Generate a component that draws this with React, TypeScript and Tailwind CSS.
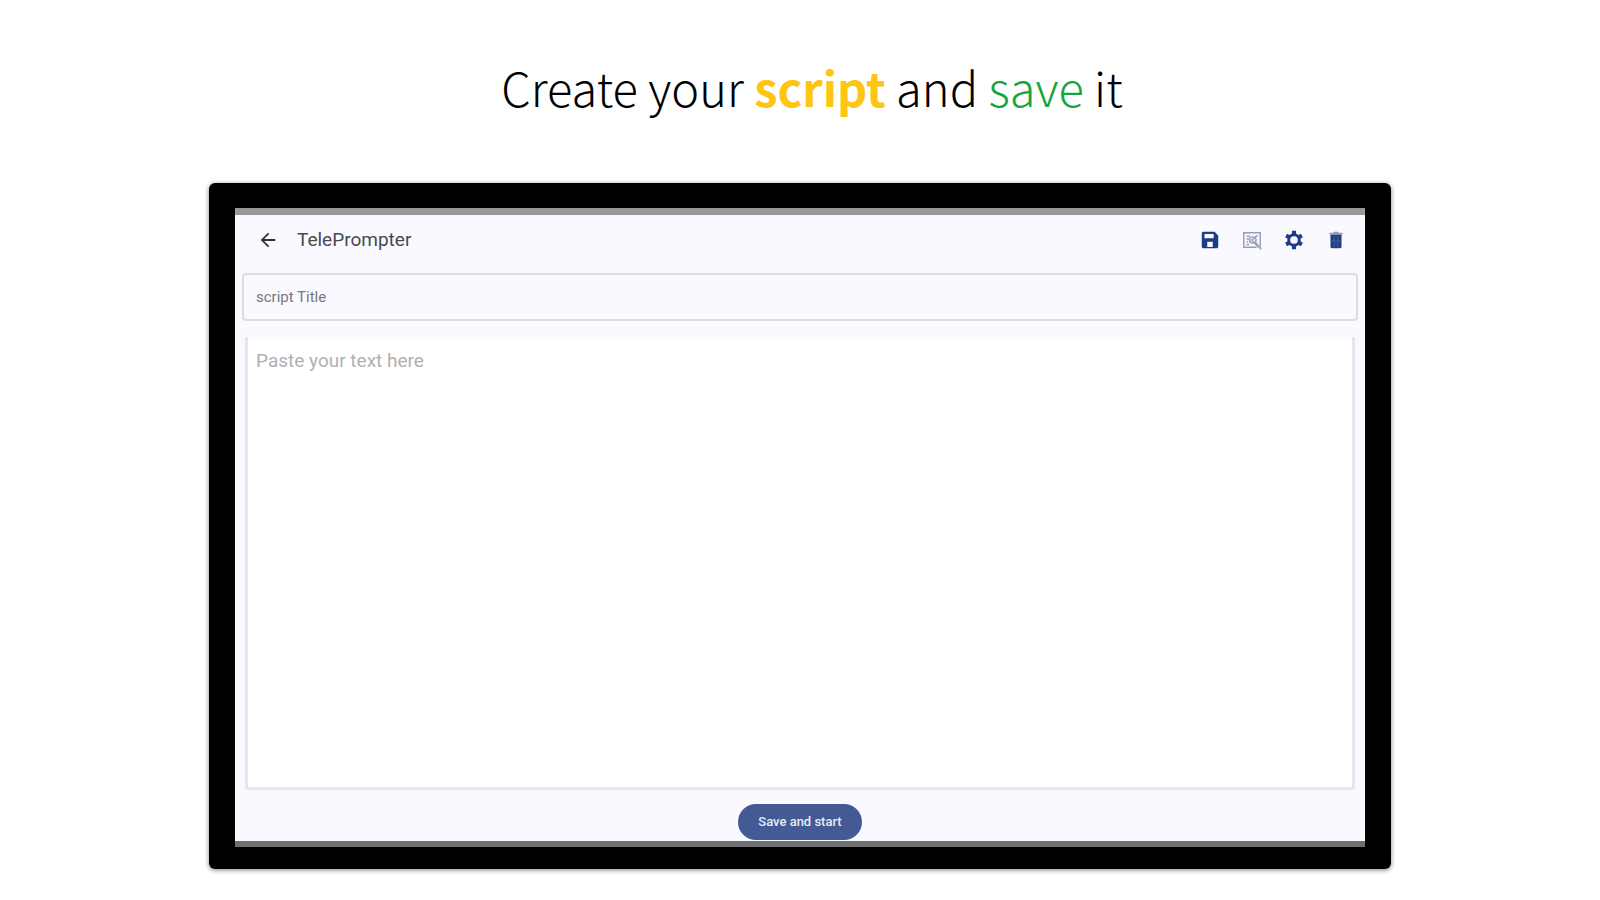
import { MdArrowBack } from "react-icons/md";

function SaveIcon() {
  return (
    <svg viewBox="0 0 24 24" className="size-[22px]" fill="currentColor" fillRule="evenodd" aria-hidden="true">
      <path d="M5 3h12l4 4v12a2 2 0 0 1-2 2H5a2 2 0 0 1-2-2V5a2 2 0 0 1 2-2zM6 5.5v4.5h10V5.5zM9 14v5.5h6V14z" />
    </svg>
  );
}

function PreviewIcon() {
  return (
    <svg viewBox="0 0 24 24" className="size-[22px]" fill="none" stroke="currentColor" strokeWidth="1.6" aria-hidden="true">
      <path d="M17 20H3V4h18v15" />
      <path d="M6 8h4M6 11h3M6 14h2M6 17h3M18 7l-6 5 7 8" />
      <circle cx="13" cy="12" r="3.4" />
      <path d="M16 15l6 7" strokeWidth="2" />
    </svg>
  );
}

function GearIcon() {
  return (
    <svg viewBox="0 0 24 24" className="size-[22px]" fill="none" stroke="currentColor" aria-hidden="true">
      <circle cx="12" cy="12" r="5.8" strokeWidth="3.2" />
      <path
        d="M12 2v4M12 18v4M20.6 7l-3.4 2M6.8 15l-3.4 2M3.4 7l3.4 2M17.2 15l3.4 2"
        strokeWidth="4.4"
      />
    </svg>
  );
}

function TrashIcon() {
  return (
    <svg viewBox="0 0 24 24" className="size-[22px]" aria-hidden="true">
      <path d="M5 4h4l1-1h4l1 1h4v2.5H5z" fill="#8b97b8" />
      <path d="M6 6.5h12V19a2 2 0 0 1-2 2H8a2 2 0 0 1-2-2z" fill="#1d3c85" />
      <path d="M10 8v12M14 8v12M6 13h12" stroke="#536ba6" strokeWidth="0.8" />
    </svg>
  );
}

const actions = [
  { label: "Save", icon: <SaveIcon />, color: "text-[#1d3c85]" },
  { label: "Preview", icon: <PreviewIcon />, color: "text-[#9a9fb8]" },
  { label: "Settings", icon: <GearIcon />, color: "text-[#1d3c85]" },
  { label: "Delete", icon: <TrashIcon />, color: "text-[#1d3c85]" },
];

export default function App() {
  return (
    <main className="flex min-h-screen flex-col items-center bg-white px-4 pt-[51px] pb-[31px] font-['Roboto',sans-serif]">
      <h1 className="pl-6 text-center font-['Noto_Sans_CJK_SC',sans-serif] text-[47px] leading-[72px] font-light text-black">
        Create your <span className="font-bold text-[#fcc613]">script</span> and{" "}
        <span className="text-[#16a53c]">save</span> it
      </h1>

      <section className="mt-[60px] flex w-full max-w-[1182px] grow flex-col rounded-md bg-black px-[26px] pt-[25px] pb-[22px] shadow-[0_1px_5px_rgba(0,0,0,0.5)]">
        <div className="flex grow flex-col border-t-[7px] border-b-[6px] border-t-[#999999] border-b-[#6f6f6f] bg-[#f9f9ff]">
          <header className="flex h-[58px] items-center justify-between pr-[18px] pb-2 pl-[22px]">
            <div className="flex items-center gap-[18px]">
              <button type="button" aria-label="Back" className="text-[#333338]">
                <MdArrowBack className="size-[22px]" />
              </button>
              <h2 className="text-[19px] leading-6 text-[#49494d]">TelePrompter</h2>
            </div>
            <nav className="flex gap-5">
              {actions.map((a) => (
                <button key={a.label} type="button" aria-label={a.label} className={a.color}>
                  {a.icon}
                </button>
              ))}
            </nav>
          </header>

          <div className="flex grow flex-col px-[7px]">
            <input
              type="text"
              aria-label="Script title"
              placeholder="script Title"
              className="h-12 w-full rounded-sm border-2 border-[#dcdce1] bg-transparent px-3 text-[15px] text-[#49494d] outline-none placeholder:text-[#77777c]"
            />
            <div className="mt-4 flex grow px-[3px]">
              <textarea
                aria-label="Script text"
                placeholder="Paste your text here"
                className="w-full resize-none rounded-b-sm border-x-[3px] border-b-[3px] border-[#e6e6eb] bg-white px-2 py-3 text-[19px] leading-6 text-[#49494d] outline-none placeholder:text-[#b0b0b3]"
              />
            </div>
            <div className="flex justify-center pt-[14px] pb-px">
              <button type="button" className="h-9 rounded-full bg-[#435a95] px-5 text-[13px] leading-5 font-medium text-[#e8ebf6]">
                Save and start
              </button>
            </div>
          </div>
        </div>
      </section>
    </main>
  );
}
